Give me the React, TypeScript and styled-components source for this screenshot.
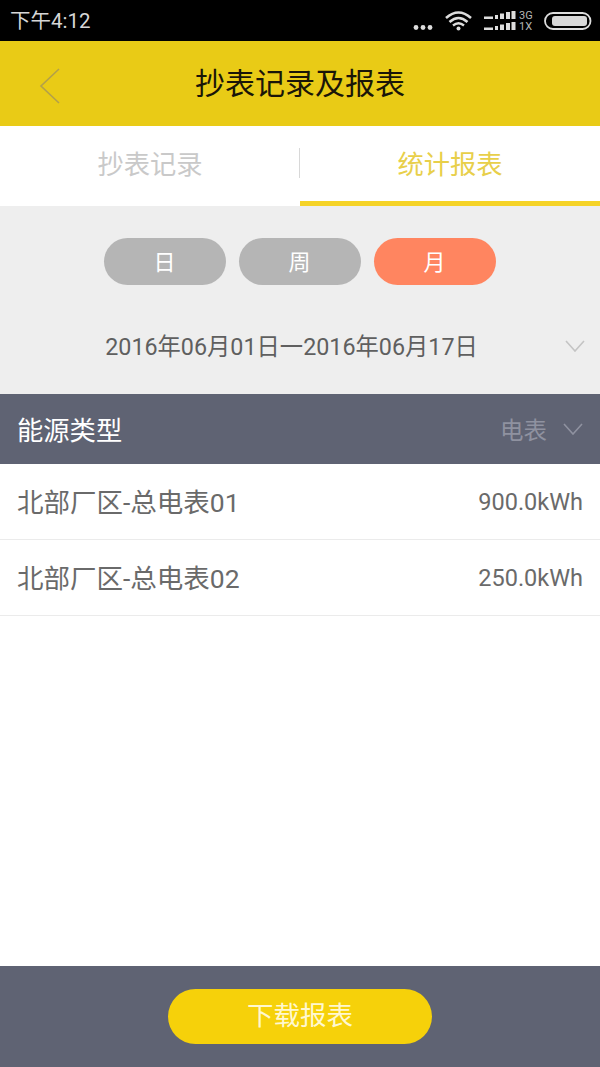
import { createGlobalStyle } from "styled-components";
import styled from "styled-components";

const GlobalStyle = createGlobalStyle`
  html, body {
    margin: 0;
    padding: 0;
    background: #fff;
  }
  body {
    font-family: Roboto, "Noto Sans CJK SC", sans-serif;
  }
`;

const Page = styled.div`
  width: 600px;
  height: 1067px;
  display: flex;
  flex-direction: column;
  overflow: hidden;
  background: #fff;
`;

const StatusBar = styled.div`
  height: 41px;
  flex: none;
  background: #000;
  display: flex;
  align-items: center;
  justify-content: space-between;
  padding: 0 0 0 10px;
  color: #d6d6d6;
`;

const Clock = styled.span`
  font-size: 20.5px;
  line-height: 24px;
`;

const NavBar = styled.div`
  height: 85px;
  flex: none;
  background: #e9cb16;
  display: flex;
  align-items: center;
  justify-content: center;
  position: relative;
`;

const BackIcon = styled.svg`
  position: absolute;
  left: 39px;
  top: 26px;
`;

const NavTitle = styled.h1`
  margin: 0;
  font-size: 30px;
  font-weight: 400;
  color: #1a1608;
  line-height: 34px;
`;

const Tabs = styled.div`
  height: 80px;
  flex: none;
  display: flex;
  background: #fff;
  position: relative;
`;

const Tab = styled.div<{ $active?: boolean }>`
  flex: 1;
  display: flex;
  align-items: center;
  justify-content: center;
  font-size: 26.3px;
  padding-bottom: 3px;
  color: ${(p) => (p.$active ? "#e8cf4a" : "#c9c9c9")};
  border-bottom: 5px solid ${(p) => (p.$active ? "#f5d327" : "transparent")};
  box-sizing: border-box;
`;

const TabDivider = styled.div`
  position: absolute;
  left: 299px;
  top: 22px;
  width: 1px;
  height: 30px;
  background: #d8d8d8;
`;

const FilterPanel = styled.div`
  height: 188px;
  flex: none;
  box-sizing: border-box;
  background: #eeeeee;
  padding-top: 32px;
  display: flex;
  flex-direction: column;
`;

const PeriodRow = styled.div`
  display: flex;
  justify-content: center;
  gap: 13px;
  padding-right: 1px;
`;

const PeriodPill = styled.div<{ $active?: boolean }>`
  width: 122px;
  height: 47px;
  border-radius: 24px;
  display: flex;
  align-items: center;
  justify-content: center;
  color: #fff;
  font-size: 22px;
  padding-bottom: 3px;
  box-sizing: border-box;
  background: ${(p) => (p.$active ? "#ff8560" : "#b5b5b5")};
`;

const DateRow = styled.div`
  position: relative;
  margin-top: 44px;
  height: 34px;
  display: flex;
  align-items: center;
  justify-content: center;
  font-size: 23.3px;
  color: #5f5f5f;
  padding: 0 17px 2px 0;
  box-sizing: border-box;
`;

const DateChevron = styled.svg`
  position: absolute;
  right: 15px;
  top: 11px;
`;

const TypeBar = styled.div`
  height: 70px;
  flex: none;
  box-sizing: border-box;
  background: #5f6373;
  display: flex;
  align-items: center;
  justify-content: space-between;
  padding: 0 17px 0 17px;
`;

const TypeLabel = styled.span`
  font-size: 26.3px;
  color: #fff;
  margin-top: -2px;
`;

const TypeSelect = styled.div`
  display: flex;
  align-items: center;
  gap: 16px;
  font-size: 23.5px;
  color: #8f92a0;
  margin-top: -1px;
`;

const MeterList = styled.div`
  flex: 1;
  background: #fff;
`;

const MeterRow = styled.div`
  height: 76px;
  box-sizing: border-box;
  display: flex;
  align-items: center;
  justify-content: space-between;
  padding: 0 17px;
  border-bottom: 1px solid #ebebeb;
  color: #6a6a6a;
`;

const MeterName = styled.span`
  font-size: 26.5px;
  margin-top: -2px;
`;

const MeterValue = styled.span`
  font-size: 23.5px;
  margin-top: 1px;
`;

const Footer = styled.div`
  height: 101px;
  flex: none;
  background: #5f6373;
  display: flex;
  align-items: center;
  justify-content: center;
`;

const DownloadButton = styled.button`
  width: 264px;
  height: 55px;
  margin-bottom: 1px;
  border: none;
  border-radius: 28px;
  background: #f6d10a;
  color: #fff8d0;
  font-family: inherit;
  font-size: 26.5px;
  padding: 0 0 5px;
`;

const Chevron: React.FC<{ color: string }> = ({ color }) => (
  <svg width="20" height="12" viewBox="0 0 20 12" fill="none">
    <path d="M1 1 L10 11 L19 1" stroke={color} strokeWidth="1.6" />
  </svg>
);

// viewBox uses the picture's own coordinates for the right part of the bar
const StatusGlyphs: React.FC = () => (
  <svg width="190" height="41" viewBox="410 0 190 41" fill="none">
    <circle cx="416" cy="27.5" r="2.4" fill="#ddd" />
    <circle cx="423" cy="27.5" r="2.4" fill="#ddd" />
    <circle cx="430" cy="27.5" r="2.4" fill="#ddd" />
    <path d="M446 18 Q458.5 7 471 18" stroke="#ddd" strokeWidth="2.6" />
    <path d="M449.5 22 Q458.5 14 467.5 22" stroke="#ddd" strokeWidth="2.6" />
    <path d="M453 25.5 Q458.5 21 464 25.5" stroke="#ddd" strokeWidth="2.4" />
    <circle cx="458.5" cy="28.5" r="2" fill="#ddd" />
    {[0, 11].map((dy) => (
      <g key={dy} fill="#ddd" transform={`translate(0 ${dy})`}>
        <rect x="484" y="16.5" width="9" height="2.5" />
        <rect x="495" y="15" width="3" height="4" />
        <rect x="500" y="13.5" width="4" height="5.5" />
        <rect x="506" y="12" width="4" height="7" />
        <rect x="511.5" y="11" width="4" height="8" />
      </g>
    ))}
    <text x="519" y="19" fontSize="11" fill="#b5b5b5" fontFamily="Roboto, sans-serif">3G</text>
    <text x="519" y="30" fontSize="11" fill="#b5b5b5" fontFamily="Roboto, sans-serif">1X</text>
    <rect x="545" y="13" width="45.5" height="16" rx="8" stroke="#ddd" strokeWidth="1.8" />
    <rect x="552" y="16" width="35" height="10" rx="3" fill="#d8d8d8" />
  </svg>
);

const App: React.FC = () => {
  return (
    <Page>
      <GlobalStyle />
      <StatusBar>
        <Clock>下午4:12</Clock>
        <StatusGlyphs />
      </StatusBar>
      <NavBar>
        <BackIcon width="22" height="38" viewBox="0 0 22 38" fill="none">
          <path d="M20 2 L2 19 L20 36" stroke="#b3a04a" strokeWidth="1.6" />
        </BackIcon>
        <NavTitle>抄表记录及报表</NavTitle>
      </NavBar>
      <Tabs>
        <Tab>抄表记录</Tab>
        <Tab $active>统计报表</Tab>
        <TabDivider />
      </Tabs>
      <FilterPanel>
        <PeriodRow>
          <PeriodPill>日</PeriodPill>
          <PeriodPill>周</PeriodPill>
          <PeriodPill $active>月</PeriodPill>
        </PeriodRow>
        <DateRow>
          2016年06月01日一2016年06月17日
          <DateChevron width="20" height="12" viewBox="0 0 20 12" fill="none">
            <path d="M1 1 L10 11 L19 1" stroke="#c4c4c4" strokeWidth="1.6" />
          </DateChevron>
        </DateRow>
      </FilterPanel>
      <TypeBar>
        <TypeLabel>能源类型</TypeLabel>
        <TypeSelect>
          电表
          <Chevron color="#8f92a0" />
        </TypeSelect>
      </TypeBar>
      <MeterList>
        <MeterRow>
          <MeterName>北部厂区-总电表01</MeterName>
          <MeterValue>900.0kWh</MeterValue>
        </MeterRow>
        <MeterRow>
          <MeterName>北部厂区-总电表02</MeterName>
          <MeterValue>250.0kWh</MeterValue>
        </MeterRow>
      </MeterList>
      <Footer>
        <DownloadButton>下载报表</DownloadButton>
      </Footer>
    </Page>
  );
};

export default App;
